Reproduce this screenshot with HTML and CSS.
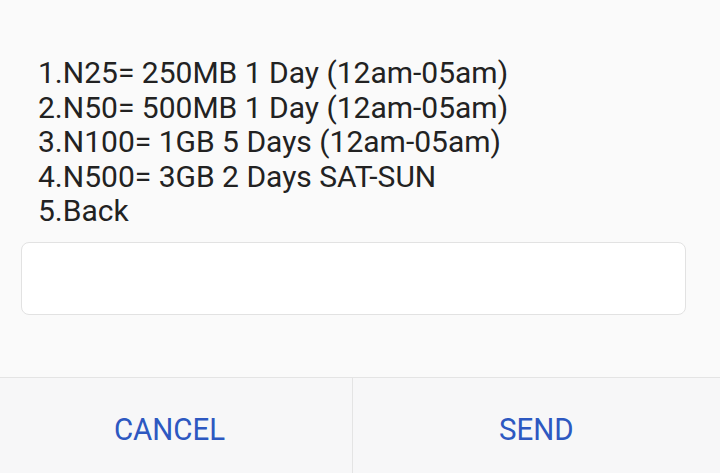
FILE: index.html
```html
<!DOCTYPE html>
<html>
<head>
<meta charset="utf-8">
<link rel="stylesheet" href="styles.css">
</head>
<body>
<div class="dialog">
  <div class="content">
    <div class="message">
      <div>1.N25= 250MB 1 Day (12am-05am)</div>
      <div>2.N50= 500MB 1 Day (12am-05am)</div>
      <div>3.N100= 1GB 5 Days (12am-05am)</div>
      <div>4.N500= 3GB 2 Days SAT-SUN</div>
      <div>5.Back</div>
    </div>
    <div class="input"></div>
  </div>
  <div class="buttons">
    <div class="btn left"><span class="label">CANCEL</span></div>
    <div class="btn right"><span class="label">SEND</span></div>
  </div>
</div>
</body>
</html>
```
FILE: styles.css
```css
html, body {
  margin: 0;
  padding: 0;
  width: 720px;
  height: 473px;
  overflow: hidden;
  background: #fafafa;
}
.dialog {
  display: flex;
  flex-direction: column;
  height: 473px;
}
.content {
  flex: 1;
  padding: 56px 34px 0 21px;
}
.message {
  font-family: Roboto, sans-serif;
  font-size: 30px;
  line-height: 34.5px;
  color: #222;
  padding-left: 17px;
}
.input {
  margin-top: 13px;
  height: 71px;
  background: #fff;
  border: 1px solid #e2e2e2;
  border-radius: 8px;
}
.buttons {
  display: flex;
  height: 95px;
  border-top: 1px solid #e4e4e4;
  background: #f7f7f8;
}
.btn {
  flex: 0 0 352px;
  display: flex;
  align-items: center;
  justify-content: center;
  padding-top: 8px;
}
.btn.left {
  padding-right: 12px;
  box-sizing: border-box;
}
.btn.right {
  flex: 1;
  border-left: 1px solid #e4e4e4;
}
.label {
  font-family: Roboto, sans-serif;
  font-size: 31px;
  color: #2d58c1;
  display: inline-block;
  transform: scaleX(0.95);
}
```
